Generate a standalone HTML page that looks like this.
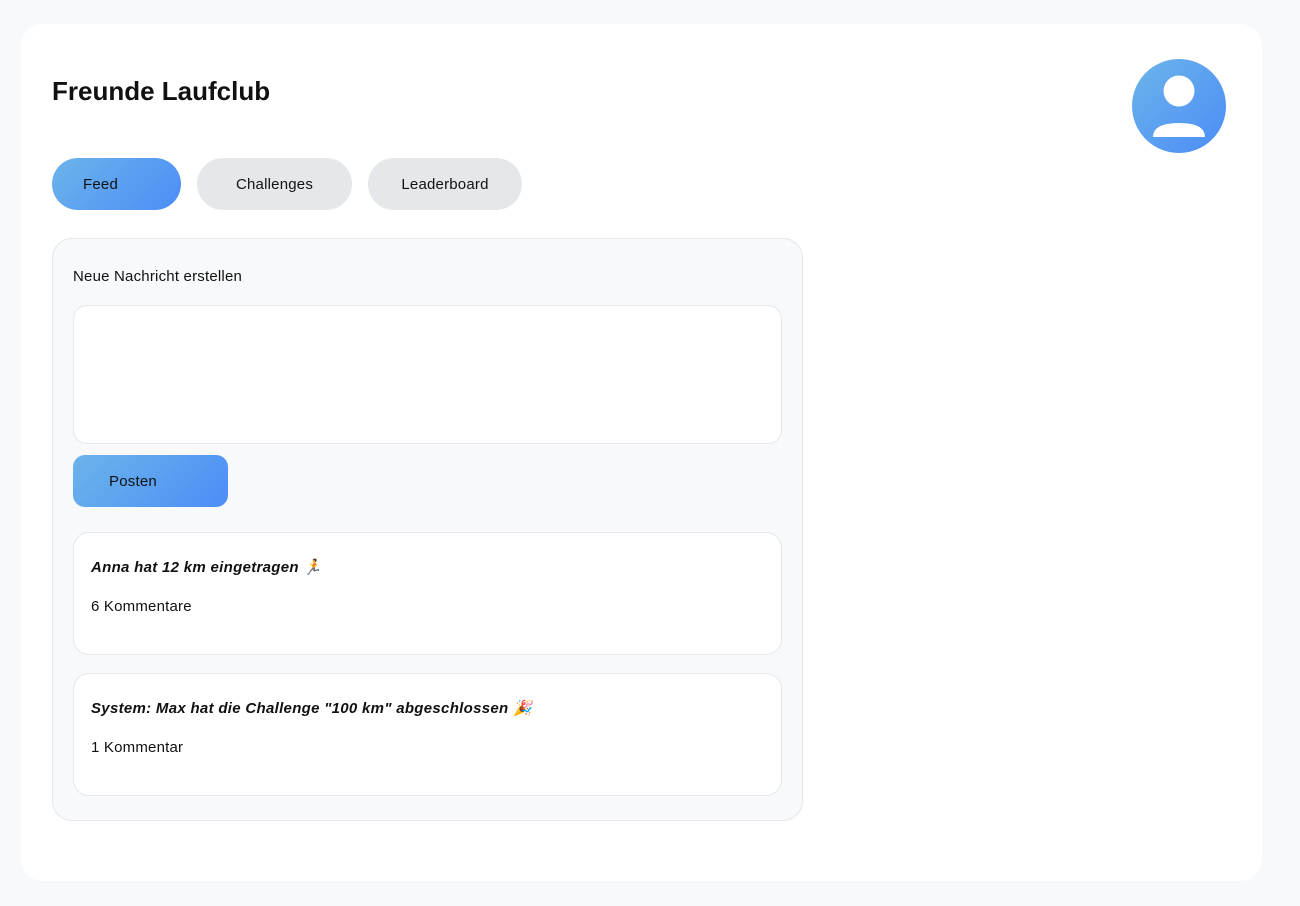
<!DOCTYPE html>
<html><head><meta charset="utf-8"><style>
*{box-sizing:border-box;margin:0;padding:0}
body{width:1300px;height:906px;background:#f8f9fb;font-family:"Liberation Sans",sans-serif;color:#111;position:relative;overflow:hidden}
.card{position:absolute;left:21px;top:24px;width:1241px;height:857px;background:#fff;border-radius:22px}
h1{position:absolute;left:52px;top:76px;font-size:26px;font-weight:bold;letter-spacing:0px}
.av{position:absolute;left:1132px;top:59px;width:94px;height:94px;border-radius:50%;background:linear-gradient(135deg,#6cb4ea,#4b8df7)}
.tab{position:absolute;top:158px;height:52px;border-radius:26px;background:#e5e7eb;font-size:15px;line-height:53px;text-align:center;letter-spacing:0.2px}
.grad{background:linear-gradient(135deg,#6cb4ea,#4b8df7)}
.panel{position:absolute;left:52px;top:238px;width:751px;height:583px;background:#f8f9fb;border:1px solid #e5e7eb;border-radius:20px}
.lbl{position:absolute;left:73px;top:268px;font-size:15px;letter-spacing:0.2px}
.ta{position:absolute;left:73px;top:305px;width:709px;height:139px;background:#fff;border:1px solid #e5e7eb;border-radius:14px}
.btn{position:absolute;left:73px;top:455px;width:155px;height:52px;border-radius:12px;font-size:15px;line-height:53px;padding-left:36px;letter-spacing:0.2px}
.post{position:absolute;left:73px;width:709px;height:123px;background:#fff;border:1px solid #e5e7eb;border-radius:16px}
.post b{position:absolute;left:17px;top:25px;font-size:15px;font-style:italic;letter-spacing:0.3px}
.post span{position:absolute;left:17px;top:65px;font-size:15px;letter-spacing:0.2px}
</style></head><body>
<div class="card"></div>
<h1>Freunde Laufclub</h1>
<div class="av"><svg width="94" height="94" viewBox="0 0 94 94"><circle cx="47" cy="32" r="15.5" fill="#fff"/><path d="M21 78 Q21 64 47 64 Q73 64 73 78 Z" fill="#fff"/></svg></div>
<div class="tab grad" style="left:52px;width:129px;text-align:left;padding-left:31px">Feed</div>
<div class="tab" style="left:197px;width:155px">Challenges</div>
<div class="tab" style="left:368px;width:154px">Leaderboard</div>
<div class="panel"></div>
<div class="lbl">Neue Nachricht erstellen</div>
<div class="ta"></div>
<div class="btn grad">Posten</div>
<div class="post" style="top:532px"><b>Anna hat 12 km eingetragen 🏃</b><span>6 Kommentare</span></div>
<div class="post" style="top:673px"><b>System: Max hat die Challenge "100 km" abgeschlossen 🎉</b><span>1 Kommentar</span></div>
</body></html>
